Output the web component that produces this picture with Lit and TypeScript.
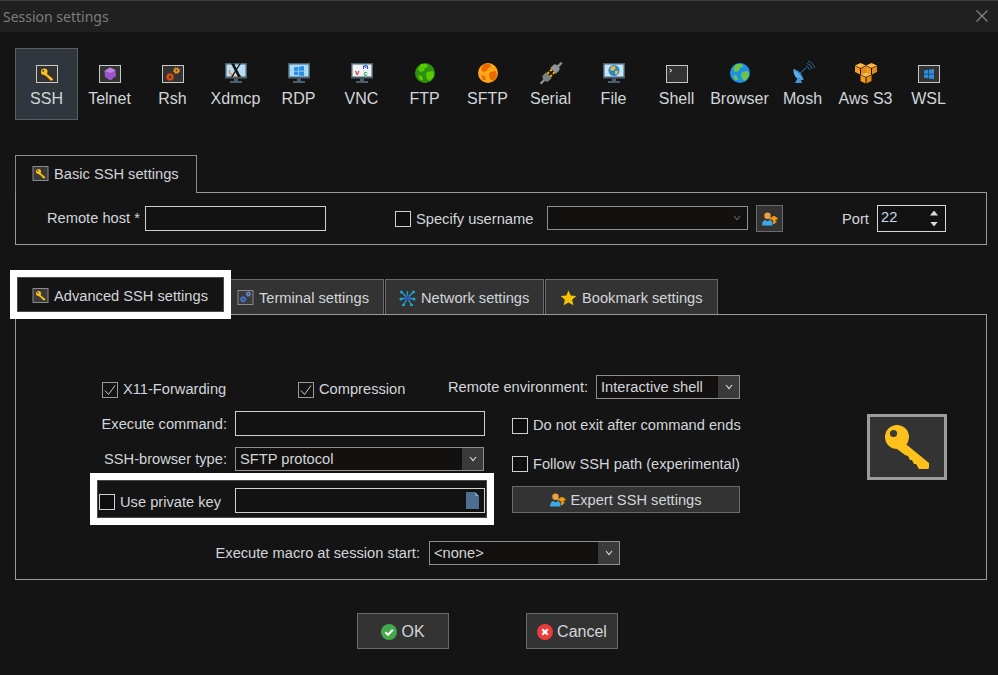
import { LitElement, html, css, svg } from "lit";
import { customElement } from "lit/decorators.js";

const keyGlyph = svg`
  <circle cx="12" cy="12" r="12" fill="#fcc11b"/>
  <path d="M11 11 L44 38 Q46 43 42 44 L34 44 L31 39 L29 39 L27 35 L25 35 L23 31 L20 30 L12 24 Z" fill="#fcc11b"/>
  <circle cx="8.5" cy="8.5" r="3.6" fill="#3a3a3a"/>`;

const box = (inner: unknown) => svg`
  <rect x="1.5" y="4.5" width="21" height="17" fill="#333" stroke="#c8c8c8"/>${inner}`;

const monitor = (screen: string, inner: unknown) => svg`
  <rect x="1" y="2" width="22" height="15.5" fill="#48606e"/>
  <rect x="2.5" y="3.5" width="19" height="12" fill="${screen}"/>
  <rect x="10" y="17.5" width="4" height="2.5" fill="#48606e"/>
  <rect x="6" y="20" width="12" height="2" fill="#48606e"/>${inner}`;

const winLogo = (x: number, y: number, s: number, fill: string) => svg`
  <path transform="translate(${x} ${y}) scale(${s})"
    d="M0 1.4 L4.3 .8 V4.8 H0 Z M5 .7 L10 0 V4.8 H5 Z M0 5.4 H4.3 V9.3 L0 8.7 Z M5 5.4 H10 V10 L5 9.4 Z" fill="${fill}"/>`;

const globe = (sea: string, land: string) => svg`
  <circle cx="12" cy="12" r="10" fill="${sea}"/>
  <path d="M8 3 L14 3 L15 6 L12 7 L11 10 L7 11 L5 8 Z M14 11 L20 10 L21 15 L17 20 L14 18 L13 14 Z M5 14 L9 15 L10 19 L7 19 Z" fill="${land}"/>`;

const gears = (a: string, b: string) => svg`
  <circle cx="9" cy="16" r="2.2" fill="none" stroke="${a}" stroke-width="2"/>
  <circle cx="9" cy="16" r="3.5" fill="none" stroke="${a}" stroke-width="1.2" stroke-dasharray="1.4 1.3"/>
  <circle cx="15.5" cy="9.5" r="1.8" fill="none" stroke="${b}" stroke-width="1.6"/>
  <circle cx="15.5" cy="9.5" r="3" fill="none" stroke="${b}" stroke-width="1" stroke-dasharray="1.3 1.1"/>`;

const cube = (x: number, y: number) => svg`
  <g transform="translate(${x} ${y})">
    <path d="M5.5 0 L11 2.5 L5.5 5 L0 2.5 Z" fill="#fdb74a"/>
    <path d="M0 3 L5 5.5 V11.5 L0 9 Z" fill="#f29b1f"/>
    <path d="M11 3 L6 5.5 V11.5 L11 9 Z" fill="#e58a12"/>
  </g>`;

const icons: Record<string, unknown> = {
  ssh: box(svg`<g transform="translate(6 7.5) scale(.27)">${keyGlyph}</g>`),
  telnet: box(svg`
    <path d="M12 6.5 L17.5 9 L18 15 L12.5 19.5 L7 16 L6.5 10 Z" fill="#9a55c8"/>
    <path d="M12 6.5 L17.5 9 L13 12 L6.5 10 Z" fill="#bb82e0"/>`),
  rsh: box(gears("#d94f0a", "#f19a1a")),
  xdmcp: monitor("#b7dcf3", svg`
    <path d="M5.5 9 A7 6 0 0 0 17 14" fill="none" stroke="#e8833a" stroke-width="1.2"/>
    <path d="M7 2.5 L10 2.5 L17 16 L14 16 Z M15.5 2.5 L17 2.5 L8.5 16 L7 16 Z" fill="#111"/>`),
  rdp: monitor("#a9dbfa", winLogo(7, 5, 1, "#2a8fe3")),
  vnc: monitor("#eef3f6", svg`
    <text x="5" y="14" font-family="Liberation Sans" font-size="8" font-weight="700" fill="#e0262c">v</text>
    <text x="13.5" y="14.5" font-family="Liberation Sans" font-size="7" font-weight="700" fill="#1aa83a">c</text>
    <path d="M13.5 8 V5.5 Q15.5 3.5 17.5 5.5 V8 M15 6.5 H16" fill="none" stroke="#3550d8" stroke-width="1.2"/>`),
  ftp: globe("#2f8f12", "#55cc00"),
  sftp: globe("#ffa617", "#e86a00"),
  serial: svg`
    <g transform="rotate(45 12 12)">
      <rect x="11" y="-3" width="2.4" height="6" fill="#8d8d8d"/>
      <rect x="11" y="21" width="2.4" height="6" fill="#8d8d8d"/>
      <path d="M8 9 V5 Q8 2 12 2 Q16 2 16 5 V9 Z" fill="#8f9396"/>
      <path d="M8 15 V19 Q8 22 12 22 Q16 22 16 19 V15 Z" fill="#7b7f82"/>
      <rect x="9" y="9" width="2" height="6" fill="#ffb400"/>
      <rect x="13" y="9" width="2" height="6" fill="#ffb400"/>
      <rect x="9" y="11.2" width="6" height="1.6" fill="#141414"/>
    </g>`,
  file: monitor("#c5e4f5", svg`
    <circle cx="12" cy="9.5" r="5.5" fill="#2f86c8"/>
    <path d="M9 6 L13 5 L13.5 8 L10.5 10 L8 9 Z M13 10 L16.5 9.5 L15 13.5 L13 13 Z" fill="#e5c23a"/>`),
  shell: svg`
    <rect x="1.5" y="4.5" width="21" height="17" fill="#333" stroke="#c8c8c8"/>
    <path d="M4.5 8 L7 9.5 L4.5 11" fill="none" stroke="#dcdcdc"/>`,
  browser: globe("#1e90e8", "#6cc644"),
  mosh: svg`
    <path d="M2.5 8 Q7 9 10 13 Q12 16 12.5 19 Q5 19 3 13 Q2.2 10 2.5 8 Z" fill="#5aaeea"/>
    <path d="M4 9 Q9 11 12 18" fill="none" stroke="#2c78b8" stroke-width="1"/>
    <path d="M6 18 L9 16 L11 22 H4 Z" fill="#3f97dc"/>
    <path d="M8 13 L15 7" stroke="#2c78b8"/>
    <path d="M15 5 Q18 6 18.5 9 M16 2.5 Q20.5 3.5 21 8 M17 0.5 Q22.5 1.5 23.5 7" fill="none" stroke="#2a6da5"/>`,
  aws: svg`${cube(1, 2)}${cube(12, 2)}${cube(6.5, 11)}`,
  wsl: box(winLogo(7, 8, 1, "#2a8fe3")),
};

const tabKey = html`<svg class="tab-icon" viewBox="0 0 16 16">
  <rect x=".5" y=".5" width="15" height="14" fill="#3a3a3a" stroke="#8a8a8a"/>
  <g transform="translate(3.5 3) scale(.21)">${keyGlyph}</g>
</svg>`;

const tabGears = html`<svg class="tab-icon" viewBox="0 0 16 16">
  <rect x=".5" y=".5" width="15" height="14" fill="#3a3a3a" stroke="#8a8a8a"/>
  <g transform="translate(-1.5 -3.5) scale(.8)">${gears("#4a74d8", "#6f8fe0")}</g>
</svg>`;

const network = html`<svg class="tab-icon" viewBox="0 0 16 16">
  <path d="M8 8 L2 2 M8 8 L14 2 M8 8 L8 1 M8 8 L1 9 M8 8 L15 9 M8 8 L4 15 M8 8 L12 15" stroke="#19a5cf" stroke-width="1.3"/>
  <circle cx="2" cy="2" r="1.6" fill="#19a5cf"/><circle cx="14" cy="2" r="1.6" fill="#19a5cf"/>
  <circle cx="1.5" cy="9" r="1.6" fill="#19a5cf"/><circle cx="14.5" cy="9" r="1.6" fill="#19a5cf"/>
  <circle cx="4" cy="15" r="1.6" fill="#19a5cf"/><circle cx="12" cy="15" r="1.6" fill="#19a5cf"/>
  <circle cx="8" cy="8" r="2.4" fill="#3a4cc4"/>
</svg>`;

const star = html`<svg class="tab-icon" viewBox="0 0 16 16">
  <path d="M8 .5 L10.2 5.6 L15.8 6.1 L11.6 9.8 L12.9 15.3 L8 12.4 L3.1 15.3 L4.4 9.8 L.2 6.1 L5.8 5.6 Z" fill="#f7c302"/>
</svg>`;

const userKey = html`<svg class="user-key" viewBox="0 0 16 14">
  <circle cx="5.5" cy="3.8" r="3.2" fill="#f0a040"/>
  <path d="M0 13.5 Q0 8.5 3.5 8 L5.5 9.5 L7.5 8 Q9.5 8.5 10.5 10 L10.5 13.5 Z" fill="#3fa9e8"/>
  <circle cx="12" cy="6.5" r="2.4" fill="#f29a12"/>
  <path d="M7.5 5.6 H15.5 V7.4 H7.5 Z M11.2 7 H13 V12 H11.2 Z M13 9 H14.5 V10.4 H13 Z" fill="#f29a12"/>
</svg>`;

const okIcon = html`<svg class="btn-icon" viewBox="0 0 16 16">
  <circle cx="8" cy="8" r="8" fill="#43a94b"/>
  <path d="M4.3 8.3 L7 10.8 L11.8 5.8" fill="none" stroke="#fff" stroke-width="2"/>
</svg>`;

const cancelIcon = html`<svg class="btn-icon" viewBox="0 0 16 16">
  <circle cx="8" cy="8" r="8" fill="#ee3a38"/>
  <path d="M5.2 5.2 L10.8 10.8 M10.8 5.2 L5.2 10.8" fill="none" stroke="#fff" stroke-width="2.2"/>
</svg>`;

const chevron = html`<svg class="chev" viewBox="0 0 8 6">
  <path d="M1 1 L4 4.6 L7 1" fill="none" stroke="currentColor" stroke-width="1.1"/>
</svg>`;

const tools = [
  ["SSH", "ssh"], ["Telnet", "telnet"], ["Rsh", "rsh"], ["Xdmcp", "xdmcp"], ["RDP", "rdp"],
  ["VNC", "vnc"], ["FTP", "ftp"], ["SFTP", "sftp"], ["Serial", "serial"], ["File", "file"],
  ["Shell", "shell"], ["Browser", "browser"], ["Mosh", "mosh"], ["Aws S3", "aws"], ["WSL", "wsl"],
];

@customElement("app-root")
export class AppRoot extends LitElement {
  static styles = css`
    :host {
      display: block;
      width: 998px;
      height: 675px;
      overflow: hidden;
      background: #141414;
      color: #d2d6da;
      font-family: "Liberation Sans", Arial, sans-serif;
      font-size: 14.67px;
    }

    .titlebar {
      display: flex;
      justify-content: space-between;
      align-items: center;
      box-sizing: border-box;
      height: 32px;
      padding: 0 10px 0 3px;
      background: #202020;
      border-top: 1px solid #3c3c3c;
      color: #7c7c7c;
      font-family: "Noto Sans", sans-serif;
      font-size: 14px;
    }

    .close { width: 12px; height: 12px; margin-top: -1px; }

    .tools {
      display: flex;
      padding: 16px 0 0 15px;
    }

    .tool {
      display: flex;
      flex-direction: column;
      align-items: center;
      box-sizing: border-box;
      flex: none;
      width: 63px;
      height: 72px;
      padding-top: 12px;
      border: 1px solid transparent;
      font-size: 16px;
      line-height: 18px;
      white-space: nowrap;
    }

    .tool.active {
      background: #2f363d;
      border-color: #5c5f62;
    }

    .tool svg { width: 24px; height: 24px; margin-bottom: 5px; flex: none; overflow: visible; }

    .basic { margin: 35px 15px 0; }

    .tab-row { display: flex; align-items: flex-end; }

    .tab {
      display: flex;
      align-items: center;
      gap: 5px;
      box-sizing: border-box;
      height: 35px;
      padding-top: 1px;
      background: #333;
      border: 1px solid #6a6a6a;
      border-bottom: none;
      white-space: nowrap;
    }

    .tab-basic {
      position: relative;
      width: 182px;
      height: 38px;
      margin-bottom: -1px;
      padding: 0 0 2px 16px;
      background: #141414;
      border-color: #8a8a8a;
      z-index: 1;
    }

    .tab-icon { width: 17px; height: 16px; flex: none; }

    .panel {
      box-sizing: border-box;
      width: 972px;
      border: 1px solid #9a9a9a;
    }

    .basic-panel {
      display: grid;
      grid-template-columns: 98px 181px 221px 201px 35px 94px 69px;
      align-items: center;
      height: 53px;
      padding-left: 31px;
    }

    .remote-label { margin-bottom: 2px; }

    .field {
      box-sizing: border-box;
      height: 25px;
      background: #121212;
      border: 1px solid #cfcfcf;
      line-height: 22px;
      padding-left: 3px;
    }

    .select {
      display: flex;
      justify-content: space-between;
      box-sizing: border-box;
      height: 24px;
      padding-left: 4px;
      background: #121110;
      border: 1px solid #8e8e8e;
      line-height: 22px;
    }

    .basic-panel .select { margin-bottom: 1px; }

    .arrow {
      display: flex;
      align-items: center;
      justify-content: center;
      width: 21px;
      background: #3a3a3a;
      color: #dcdcdc;
    }

    .arrow.plain { background: none; color: #666; }

    .chev { width: 8px; height: 6px; }

    .check {
      display: flex;
      align-items: center;
      gap: 5px;
      height: 16px;
      white-space: nowrap;
    }

    .check-label { margin-bottom: 2px; }

    .specify { margin: 1px 0 0 69px; }
    .specify .check-label,
    .key-row .check-label,
    .follow .check-label { margin-bottom: 0; }

    .box {
      box-sizing: border-box;
      width: 16px;
      height: 16px;
      flex: none;
      background: #0e0e0e;
      border: 1px solid #d0d0d0;
    }

    .box.on { border-color: #9a9a9a; background: #141414; }

    .box svg { display: block; width: 14px; height: 14px; }

    .user-btn {
      display: flex;
      align-items: center;
      justify-content: center;
      box-sizing: border-box;
      width: 27px;
      height: 27px;
      margin-left: 8px;
      background: #333;
      border: 1px solid #6a6a6a;
    }

    .user-key { width: 16px; height: 14px; }

    .port-label { margin-left: 59px; }

    .spin {
      display: flex;
      justify-content: space-between;
      box-sizing: border-box;
      height: 27px;
      padding: 0 7px 0 3px;
      background: #121212;
      border: 1px solid #d8d8d8;
      color: #c6d8ea;
      line-height: 23px;
    }

    .spin-arrows {
      display: flex;
      flex-direction: column;
      justify-content: center;
      gap: 6px;
    }

    .spin-arrows i {
      display: block;
      width: 8px;
      height: 5px;
      background: #dcdcdc;
    }

    .spin-arrows .up { clip-path: polygon(50% 0, 100% 100%, 0 100%); }
    .spin-arrows .down { clip-path: polygon(0 0, 100% 0, 50% 100%); }

    .advanced { margin: 34px 15px 0; }

    .tab-adv {
      position: relative;
      width: 209px;
      height: 38px;
      margin: -2px 0 -1px;
      padding: 0 0 2px 16px;
      background: #141414;
      border-color: #555;
      z-index: 1;
    }

    .tab-term { width: 160px; padding-left: 12px; }
    .tab-net { width: 159px; padding-left: 13px; margin-left: 1px; }
    .tab-mark { width: 173px; padding-left: 14px; margin-left: 1px; }

    .mark {
      position: absolute;
      box-sizing: border-box;
      border: 7px solid #fff;
      box-shadow: inset 0 0 0 1px #4a4a4a;
      pointer-events: none;
    }

    .tab-adv .mark { left: -6px; top: -8px; width: 221px; height: 49px; }

    .adv-panel {
      height: 266px;
      padding: 60px 0 0 84px;
    }

    .top-row {
      display: grid;
      grid-template-columns: 196px 150px 148px 144px;
      height: 24px;
      padding-left: 2px;
      white-space: nowrap;
    }

    .top-row .check { margin-top: 7px; }
    .top-row .env-label { align-self: center; }

    .columns {
      display: flex;
      margin-top: 12px;
    }

    .left {
      display: flex;
      flex-direction: column;
      width: 385px;
    }

    .form-row {
      position: relative;
      display: grid;
      grid-template-columns: 127px 250px;
      column-gap: 8px;
      align-items: center;
    }

    .form-row .label { text-align: right; white-space: nowrap; }

    .browser-row { margin-top: 11px; }
    .browser-row .select { width: 249px; }
    .key-row { margin-top: 17px; }
    .key-row .check { margin: 2px 0 0 -1px; }

    .key-row .mark { left: -10px; top: -15px; width: 404px; height: 52px; }

    .key-field {
      display: flex;
      justify-content: flex-end;
      align-items: center;
      padding-right: 4px;
    }

    .doc { width: 15px; height: 17px; }

    .right {
      display: flex;
      flex-direction: column;
      width: 228px;
      margin-left: 27px;
      padding-top: 7px;
    }

    .follow { margin-top: 22px; }

    .expert {
      display: flex;
      align-items: center;
      justify-content: center;
      gap: 4px;
      box-sizing: border-box;
      height: 27px;
      margin-top: 14px;
      background: #333;
      border: 1px solid #6a6a6a;
    }

    .big-key {
      display: flex;
      align-items: center;
      justify-content: center;
      box-sizing: border-box;
      width: 80px;
      height: 66px;
      margin: 3px 0 0 127px;
      background: #333;
      border: 3px solid #9c9c9c;
    }

    .big-key svg { width: 44px; height: 44px; }

    .macro {
      display: flex;
      align-items: center;
      gap: 9px;
      margin-top: 28px;
      padding-left: 114px;
    }

    .macro-label { width: 206px; white-space: nowrap; text-align: right; }

    .macro .select { width: 191px; }

    .actions {
      display: flex;
      gap: 77px;
      margin-top: 33px;
      padding-left: 357px;
    }

    .action {
      display: flex;
      align-items: center;
      justify-content: center;
      gap: 4px;
      box-sizing: border-box;
      width: 92px;
      height: 36px;
      padding-top: 1px;
      background: #333;
      border: 1px solid #6a6a6a;
      font-size: 16px;
    }

    .btn-icon { width: 16px; height: 16px; }
  `;

  private renderCheck(label: string, on = false) {
    return html`<span class="check">
      <span class="box ${on ? "on" : ""}">
        ${on
          ? html`<svg viewBox="0 0 14 14"><path d="M2 7.5 L5.5 11.5 L12 2.5" fill="none" stroke="#c8c8c8"/></svg>`
          : ""}
      </span>
      <span class="check-label">${label}</span>
    </span>`;
  }

  private renderSelect(value: string, plain = false) {
    return html`<div class="select">
      <span>${value}</span>
      <span class="arrow ${plain ? "plain" : ""}">${chevron}</span>
    </div>`;
  }

  render() {
    return html`
      <div class="titlebar">
        <span>Session settings</span>
        <svg class="close" viewBox="0 0 12 12">
          <path d="M.5 .5 L11.5 11.5 M11.5 .5 L.5 11.5" stroke="#8a8a8a" stroke-width="1.1"/>
        </svg>
      </div>

      <div class="tools">
        ${tools.map(
          ([label, icon], i) => html`<div class="tool ${i === 0 ? "active" : ""}">
            <svg viewBox="0 0 24 24">${icons[icon]}</svg>
            <span>${label}</span>
          </div>`
        )}
      </div>

      <section class="basic">
        <div class="tab-row">
          <div class="tab tab-basic">${tabKey}Basic SSH settings</div>
        </div>
        <div class="panel basic-panel">
          <span class="remote-label">Remote host *</span>
          <div class="field"></div>
          <div class="specify">${this.renderCheck("Specify username")}</div>
          ${this.renderSelect("", true)}
          <div class="user-btn">${userKey}</div>
          <span class="port-label">Port</span>
          <div class="spin">
            <span>22</span>
            <span class="spin-arrows"><i class="up"></i><i class="down"></i></span>
          </div>
        </div>
      </section>

      <section class="advanced">
        <div class="tab-row">
          <div class="tab tab-adv">${tabKey}Advanced SSH settings<span class="mark"></span></div>
          <div class="tab tab-term">${tabGears}Terminal settings</div>
          <div class="tab tab-net">${network}Network settings</div>
          <div class="tab tab-mark">${star}Bookmark settings</div>
        </div>
        <div class="panel adv-panel">
          <div class="top-row">
            ${this.renderCheck("X11-Forwarding", true)}
            ${this.renderCheck("Compression", true)}
            <span class="env-label">Remote environment:</span>
            ${this.renderSelect("Interactive shell")}
          </div>

          <div class="columns">
            <div class="left">
              <div class="form-row">
                <span class="label">Execute command:</span>
                <div class="field"></div>
              </div>
              <div class="form-row browser-row">
                <span class="label">SSH-browser type:</span>
                ${this.renderSelect("SFTP protocol")}
              </div>
              <div class="form-row key-row">
                ${this.renderCheck("Use private key")}
                <div class="field key-field">
                  <svg class="doc" viewBox="0 0 15 17">
                    <path d="M1 0 H10 L14 4 V17 H1 Z" fill="#4c6f91"/>
                    <path d="M10 0 L14 4 H10 Z" fill="#7f9db8"/>
                  </svg>
                </div>
                <span class="mark"></span>
              </div>
            </div>

            <div class="right">
              ${this.renderCheck("Do not exit after command ends")}
              <div class="follow">${this.renderCheck("Follow SSH path (experimental)")}</div>
              <div class="expert">${userKey}Expert SSH settings</div>
            </div>

            <div class="big-key">
              <svg viewBox="0 0 44 44">${keyGlyph}</svg>
            </div>
          </div>

          <div class="macro">
            <span class="macro-label">Execute macro at session start:</span>
            ${this.renderSelect("<none>")}
          </div>
        </div>
      </section>

      <div class="actions">
        <div class="action">${okIcon}OK</div>
        <div class="action">${cancelIcon}Cancel</div>
      </div>
    `;
  }
}
